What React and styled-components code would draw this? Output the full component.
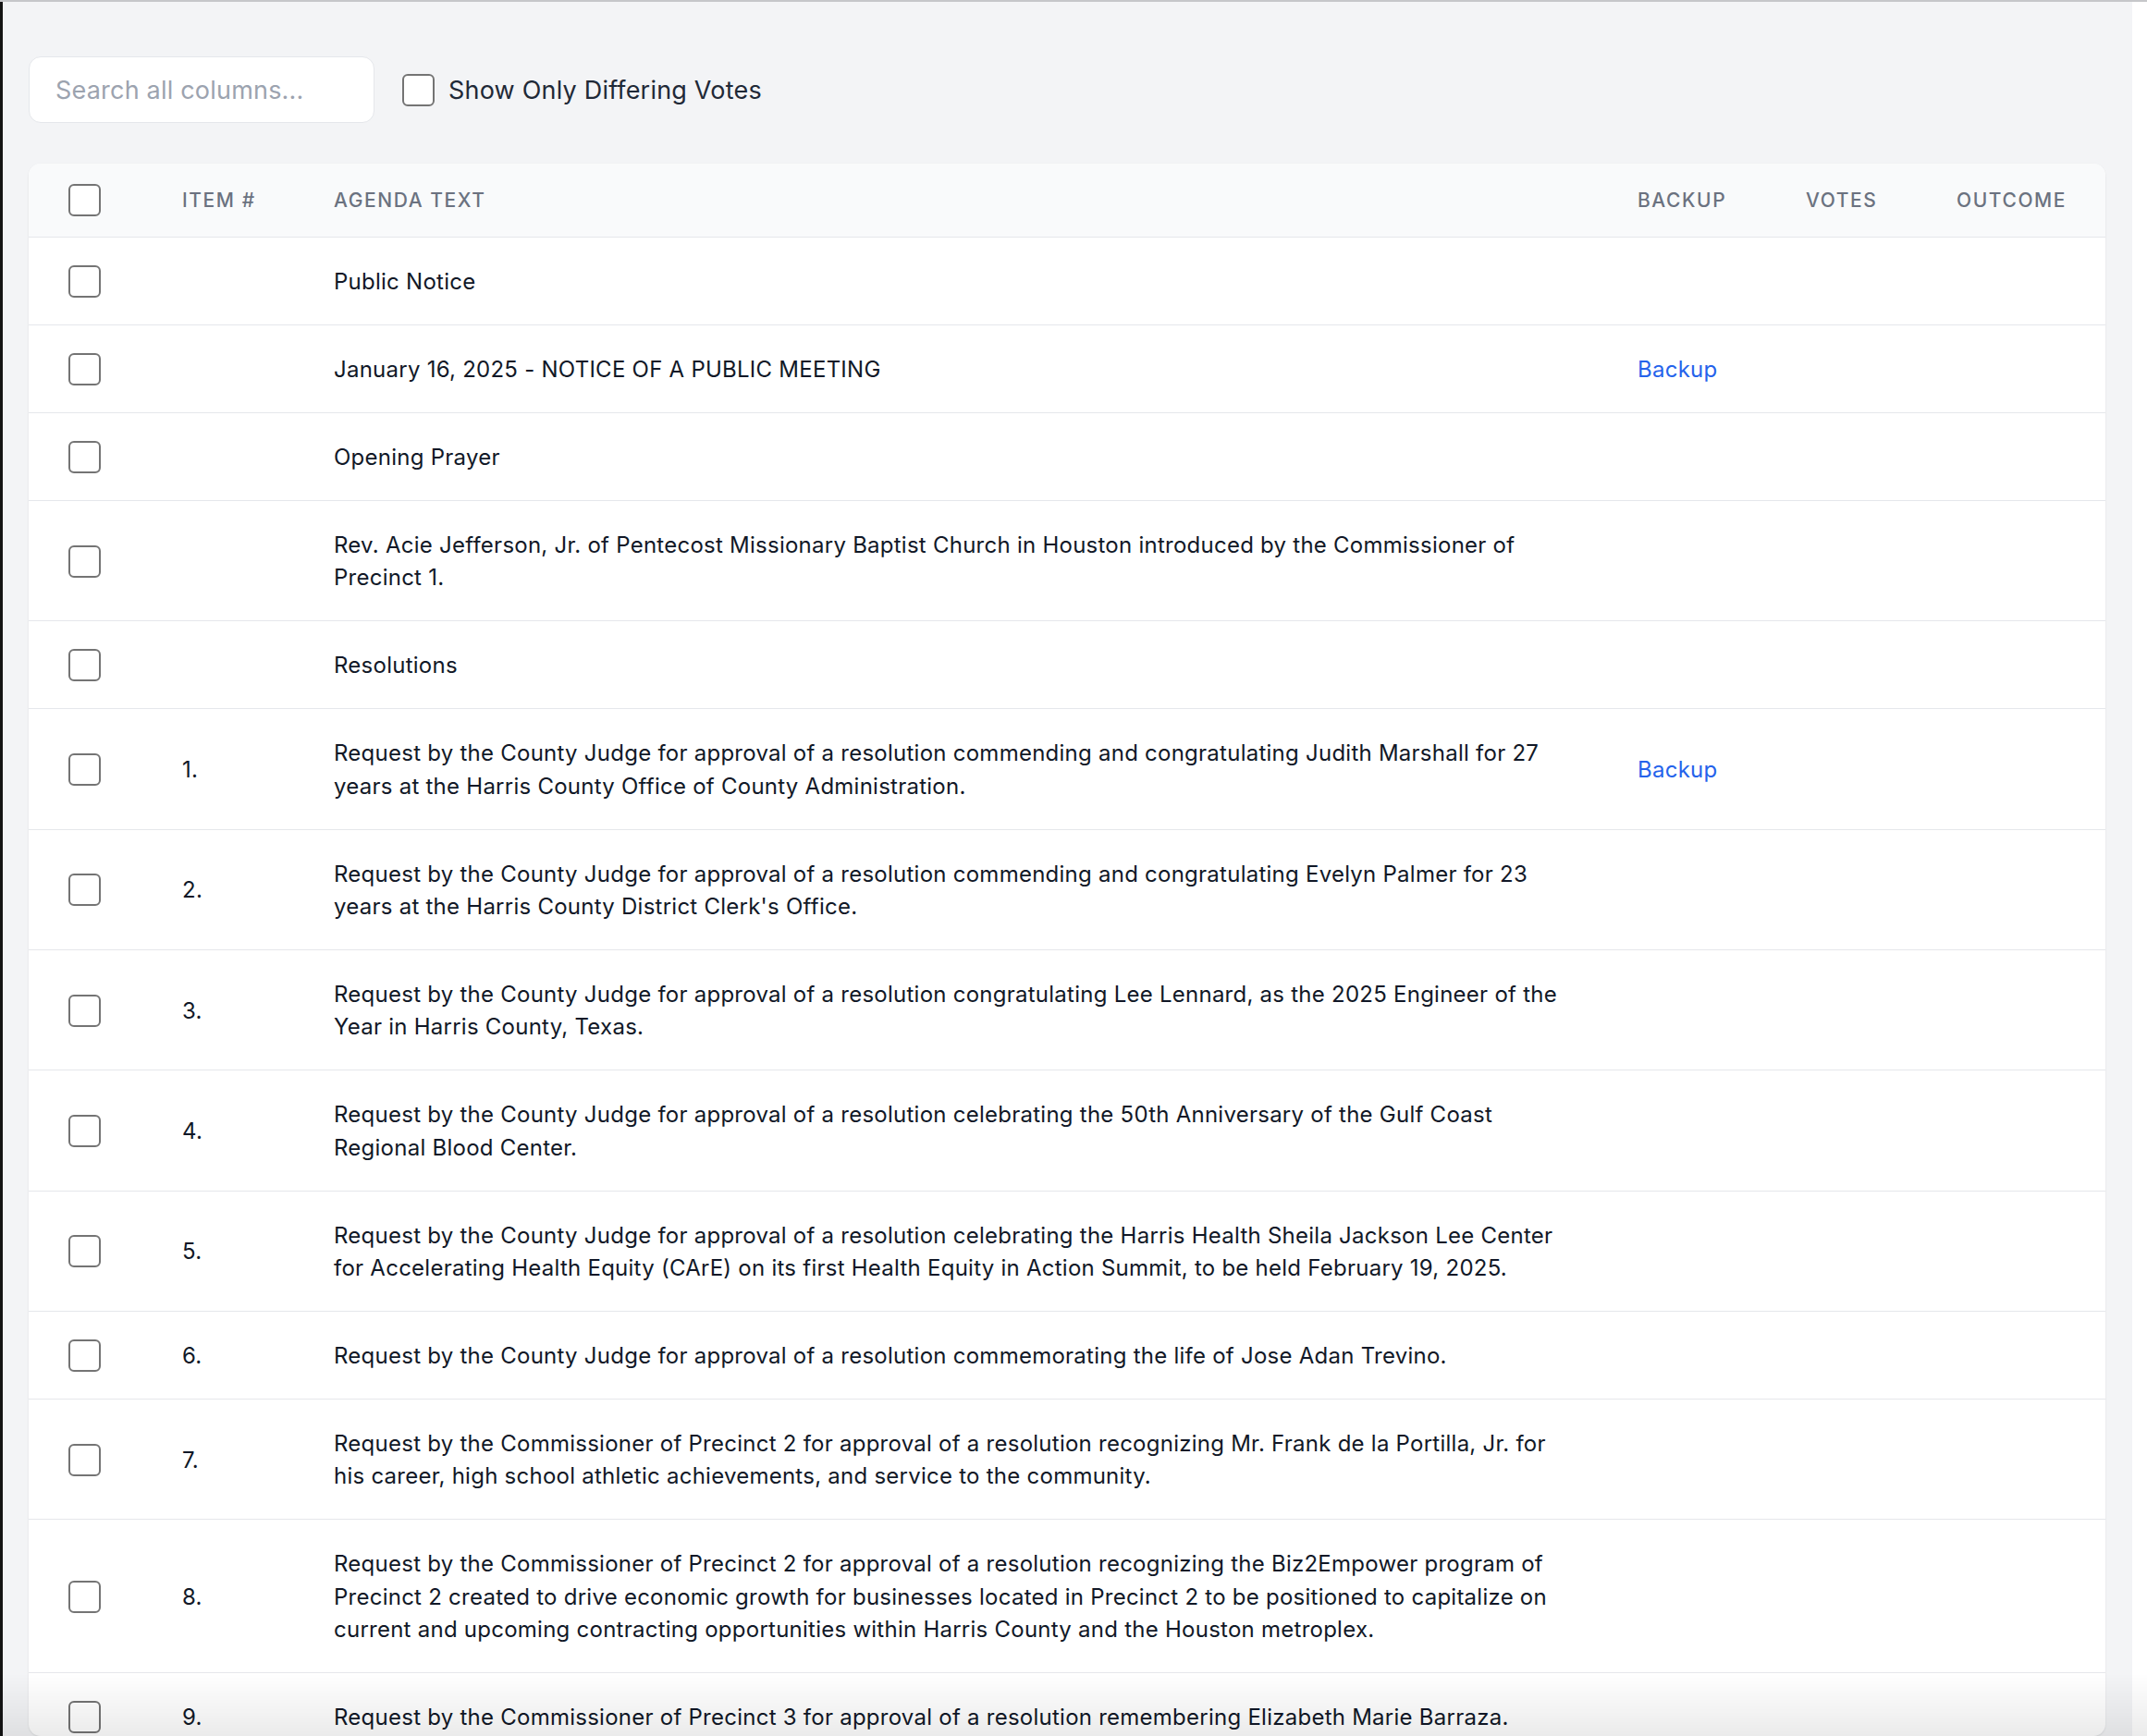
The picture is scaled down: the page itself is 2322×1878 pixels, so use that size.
import React from "react";
import styled, { createGlobalStyle } from "styled-components";

const GlobalStyle = createGlobalStyle`
  html, body {
    margin: 0;
    padding: 0;
    height: 100%;
    overflow: hidden;
    background: #ffffff;
  }
  #root { height: 100%; }
  * { box-sizing: border-box; }
`;

const Frame = styled.div`
  height: 1878px;
  border-top: 2px solid #c6c7ca;
  display: flex;
  overflow: hidden;
  font-family: Inter, "Noto Sans", "Liberation Sans", sans-serif;
  -webkit-font-smoothing: antialiased;
`;

const LeftEdge = styled.div`
  width: 3px;
  flex: none;
  background: #141414;
`;

const Gutter = styled.div`
  width: 16px;
  flex: none;
  background: #ffffff;
`;

const Page = styled.main`
  flex: 1;
  min-width: 0;
  background: #f3f4f6;
  padding: 59px 29px 0 28px;
  display: flex;
  flex-direction: column;
  gap: 44px;
`;

const Toolbar = styled.div`
  display: flex;
  align-items: center;
  gap: 30px;
`;

const SearchInput = styled.input`
  width: 374px;
  height: 72px;
  border: 1px solid #e5e7eb;
  border-radius: 13px;
  background: #ffffff;
  padding: 0 28px;
  font-family: inherit;
  font-size: 27px;
  letter-spacing: 0.2px;
  color: #111827;
  outline: none;
  &::placeholder { color: #9ca3af; }
`;

const CheckLabel = styled.label`
  display: flex;
  align-items: center;
  gap: 15px;
  font-size: 27px;
  letter-spacing: 0.2px;
  color: #1f2937;
  cursor: pointer;
`;

const Box = styled.input.attrs({ type: "checkbox" })`
  appearance: none;
  -webkit-appearance: none;
  margin: 0;
  width: 35px;
  height: 35px;
  flex: none;
  border: 2px solid #747474;
  border-radius: 6px;
  background: #ffffff;
  display: block;
`;

const Card = styled.section`
  background: #ffffff;
  border-radius: 13px;
  box-shadow: 0 1px 3px rgba(0, 0, 0, 0.06), 0 1px 2px rgba(0, 0, 0, 0.04);
  overflow: hidden;
`;

const Table = styled.table`
  width: 100%;
  border-collapse: collapse;
  table-layout: fixed;
`;

const HeadRow = styled.tr`
  background: #f9fafb;
  border-bottom: 1px solid #e5e7eb;
`;

const Th = styled.th`
  height: 79px;
  padding: 0 0 0 ${(p) => p.$pl || 36}px;
  text-align: left;
  vertical-align: middle;
  font-size: 21px;
  font-weight: 500;
  letter-spacing: 0.075em;
  text-transform: uppercase;
  color: #6b7280;
`;

const Row = styled.tr`
  border-bottom: 1px solid #e5e7eb;
`;

const Td = styled.td`
  padding: 30px 0 29px ${(p) => p.$pl || 36}px;
  vertical-align: middle;
  font-size: 24px;
  line-height: 35.15px;
  letter-spacing: 0.25px;
  color: #111827;
`;

const Line = styled.span`
  display: block;
  white-space: nowrap;
`;

const BackupLink = styled.a`
  color: #2563eb;
  text-decoration: none;
  font-size: 24px;
`;

const BottomFade = styled.div`
  position: fixed;
  left: 0;
  right: 0;
  bottom: 0;
  height: 68px;
  pointer-events: none;
  background: linear-gradient(to bottom, rgba(0, 0, 0, 0), rgba(0, 0, 0, 0.08));
`;

const rows = [
  { num: "", text: ["Public Notice"] },
  { num: "", text: ["January 16, 2025 - NOTICE OF A PUBLIC MEETING"], backup: true },
  { num: "", text: ["Opening Prayer"] },
  {
    num: "",
    text: [
      "Rev. Acie Jefferson, Jr. of Pentecost Missionary Baptist Church in Houston introduced by the Commissioner of",
      "Precinct 1.",
    ],
  },
  { num: "", text: ["Resolutions"] },
  {
    num: "1.",
    text: [
      "Request by the County Judge for approval of a resolution commending and congratulating Judith Marshall for 27",
      "years at the Harris County Office of County Administration.",
    ],
    backup: true,
  },
  {
    num: "2.",
    text: [
      "Request by the County Judge for approval of a resolution commending and congratulating Evelyn Palmer for 23",
      "years at the Harris County District Clerk's Office.",
    ],
  },
  {
    num: "3.",
    text: [
      "Request by the County Judge for approval of a resolution congratulating Lee Lennard, as the 2025 Engineer of the",
      "Year in Harris County, Texas.",
    ],
  },
  {
    num: "4.",
    text: [
      "Request by the County Judge for approval of a resolution celebrating the 50th Anniversary of the Gulf Coast",
      "Regional Blood Center.",
    ],
  },
  {
    num: "5.",
    text: [
      "Request by the County Judge for approval of a resolution celebrating the Harris Health Sheila Jackson Lee Center",
      "for Accelerating Health Equity (CArE) on its first Health Equity in Action Summit, to be held February 19, 2025.",
    ],
  },
  {
    num: "6.",
    text: ["Request by the County Judge for approval of a resolution commemorating the life of Jose Adan Trevino."],
  },
  {
    num: "7.",
    text: [
      "Request by the Commissioner of Precinct 2 for approval of a resolution recognizing Mr. Frank de la Portilla, Jr. for",
      "his career, high school athletic achievements, and service to the community.",
    ],
  },
  {
    num: "8.",
    text: [
      "Request by the Commissioner of Precinct 2 for approval of a resolution recognizing the Biz2Empower program of",
      "Precinct 2 created to drive economic growth for businesses located in Precinct 2 to be positioned to capitalize on",
      "current and upcoming contracting opportunities within Harris County and the Houston metroplex.",
    ],
  },
  {
    num: "9.",
    text: ["Request by the Commissioner of Precinct 3 for approval of a resolution remembering Elizabeth Marie Barraza."],
  },
];

export default function App() {
  return (
    <>
      <GlobalStyle />
      <Frame>
        <LeftEdge />
        <Page>
          <Toolbar>
            <SearchInput placeholder="Search all columns..." />
            <CheckLabel>
              <Box />
              Show Only Differing Votes
            </CheckLabel>
          </Toolbar>
          <Card>
            <Table>
              <colgroup>
                <col style={{ width: 130 }} />
                <col style={{ width: 164 }} />
                <col style={{ width: 1410 }} />
                <col style={{ width: 182 }} />
                <col style={{ width: 163 }} />
                <col style={{ width: 197 }} />
              </colgroup>
              <thead>
                <HeadRow>
                  <Th $pl={43}>
                    <Box />
                  </Th>
                  <Th>Item #</Th>
                  <Th>Agenda Text</Th>
                  <Th>Backup</Th>
                  <Th>Votes</Th>
                  <Th>Outcome</Th>
                </HeadRow>
              </thead>
              <tbody>
                {rows.map((r, i) => (
                  <Row key={i}>
                    <Td $pl={43}>
                      <Box />
                    </Td>
                    <Td>{r.num}</Td>
                    <Td>
                      {r.text.map((t, j) => (
                        <Line key={j}>{t}</Line>
                      ))}
                    </Td>
                    <Td>{r.backup ? <BackupLink href="#">Backup</BackupLink> : null}</Td>
                    <Td />
                    <Td />
                  </Row>
                ))}
              </tbody>
            </Table>
          </Card>
        </Page>
        <Gutter />
      </Frame>
      <BottomFade />
    </>
  );
}
